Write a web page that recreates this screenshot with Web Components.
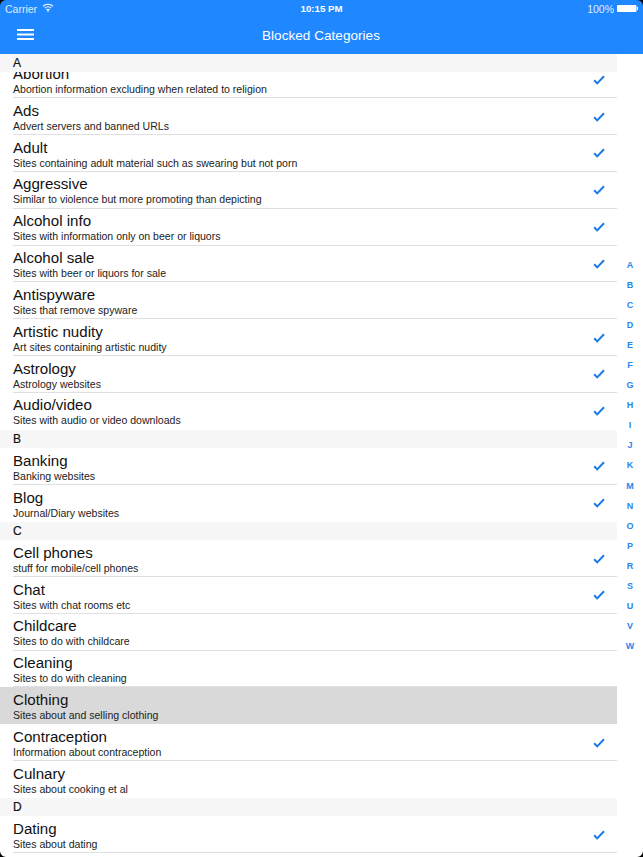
<!DOCTYPE html>
<html><head><meta charset="utf-8"><style>
html,body{margin:0;padding:0;background:#fff}
body{width:643px;height:857px;overflow:hidden;font-family:"Liberation Sans",Arial,sans-serif}
</style></head><body>
<app-screen></app-screen>
<template id="data">A|Abortion;Abortion information excluding when related to religion;1|Ads;Advert servers and banned URLs;1|Adult;Sites containing adult material such as swearing but not porn;1|Aggressive;Similar to violence but more promoting than depicting;1|Alcohol info;Sites with information only on beer or liquors;1|Alcohol sale;Sites with beer or liquors for sale;1|Antispyware;Sites that remove spyware;0|Artistic nudity;Art sites containing artistic nudity;1|Astrology;Astrology websites;1|Audio/video;Sites with audio or video downloads;1
B|Banking;Banking websites;1|Blog;Journal/Diary websites;1
C|Cell phones;stuff for mobile/cell phones;1|Chat;Sites with chat rooms etc;1|Childcare;Sites to do with childcare;0|Cleaning;Sites to do with cleaning;0|Clothing;Sites about and selling clothing;0;s|Contraception;Information about contraception;1|Culnary;Sites about cooking et al;0
D|Dating;Sites about dating;1</template>
<script>
const def=(n,css,html,init)=>customElements.define(n,class extends HTMLElement{connectedCallback(){if(this.shadowRoot)return;const r=this.attachShadow({mode:'open'});r.innerHTML='<style>'+css+'</style>'+html;init&&init(this,r)}});
def('status-bar',`:host{display:flex;align-items:center;height:17px;padding:0 5px 0 5px;color:#fff;font-size:10.5px;position:relative}
.c{position:absolute;left:0;right:0;text-align:center;font-weight:700;font-size:9.7px}.s{flex:1}
svg{display:block}`,
`<span style="opacity:.85">Carrier</span><svg width="12" height="9" viewBox="0 0 13 10" style="margin-left:5px;margin-top:-2px"><path d="M1 3.6a8 8 0 0 1 11 0M3 5.8a5.2 5.2 0 0 1 7 0M4.9 7.8a2.4 2.4 0 0 1 3.2 0" fill="none" stroke="#fff" stroke-width="1.2"/><circle cx="6.5" cy="9" r=".9" fill="#fff"/></svg><span class="s"></span><span class="c">10:15 PM</span><span style="opacity:.85;margin-right:3px">100%</span><svg width="21" height="7" viewBox="0 0 21 7"><rect width="19.5" height="7" rx="1" fill="#fff"/><rect x="20" y="2" width="1" height="3" fill="#fff"/></svg>`);
def('nav-bar',`:host{display:block;height:53.6px;background:#1f87ff;color:#fff;box-sizing:border-box}
.b{display:flex;align-items:center;height:36.6px;position:relative}
.t{flex:1;text-align:center;font-size:13.5px;letter-spacing:.05px;padding-right:1px}
svg{position:absolute;left:17px;top:12px}`,
`<slot name="status"></slot><div class="b"><svg width="17" height="11" viewBox="0 0 17 11"><path d="M0 1h17M0 5.5h17M0 10h17" stroke="#fff" stroke-width="2"/></svg><div class="t"><slot></slot></div></div>`);
def('section-head',`:host{display:block;height:18.42px;background:#f7f7f7;color:#111;font-size:12px;line-height:18px;padding-left:13px;position:relative;z-index:2;-webkit-text-stroke:.2px #111}`,`<slot></slot>`);
def('cat-row',`:host{display:block;height:36.84px;position:relative;box-sizing:border-box;padding-left:13px;color:#111}
:host([selected]){background:#d9d9d9}
.t{font-size:15.1px;line-height:19px;padding-top:2.6px}
.d{font-size:10.55px;line-height:12px;color:#222}
.sep{position:absolute;left:13px;right:0;bottom:0;height:1px;background:#e0e0e0}
:host([selected]) .sep,:host([last]) .sep{display:none}
svg{position:absolute;right:12px;top:13.4px;display:none}
:host([checked]) svg{display:block}`,
`<div class="t"><slot name="t"></slot></div><div class="d"><slot name="d"></slot></div><div class="sep"></div><svg width="12" height="10" viewBox="0 0 12 10"><path d="M1.2 5.2L4.2 8.4L11 1.2" fill="none" stroke="#1a7ae8" stroke-width="2"/></svg>`);
def('index-bar',`:host{position:absolute;right:0;top:255px;width:26px;display:flex;flex-direction:column;align-items:center;color:#2b84ea;font-size:9px;font-weight:700}
span{height:20.05px;line-height:20px}`,'',(h,r)=>{'ABCDEFGHIJKMNOPRSUVW'.split('').forEach(c=>{const s=document.createElement('span');s.textContent=c;r.appendChild(s)})});
def('cat-list',`:host{display:block;width:617px;position:relative;flex:1;overflow:hidden}`,`<slot></slot>`);
def('screen-corners',`:host{position:absolute;inset:0;pointer-events:none}
svg{position:absolute}`,
`<svg width="6" height="6" style="left:0;top:0"><path d="M0 0h6a6 6 0 0 0-6 6z"/></svg><svg width="6" height="6" style="right:0;top:0"><path d="M6 0H0a6 6 0 0 1 6 6z"/></svg><svg width="6" height="6" style="left:0;bottom:0"><path d="M0 6h6a6 6 0 0 1-6-6z"/></svg><svg width="6" height="6" style="right:0;bottom:0"><path d="M6 6H0a6 6 0 0 0 6-6z"/></svg>`);
def('app-screen',`:host{display:flex;flex-direction:column;width:643px;height:857px;position:relative;overflow:hidden}`,
`<nav-bar><status-bar slot="status"></status-bar>Blocked Categories</nav-bar><cat-list id="l"></cat-list><index-bar></index-bar><screen-corners></screen-corners>`,
(h,r)=>{
 const l=r.getElementById('l');const esc=s=>s.replace(/&/g,'&amp;');
 let first=true;
 document.getElementById('data').content.textContent.trim().split('\n').forEach((sec,si,all)=>{
  const p=sec.split('|');
  const head=document.createElement('section-head');head.textContent=p[0];l.appendChild(head);
  const items=p.slice(1);
  items.forEach((it,i)=>{
   const [t,d,c,s]=it.split(';');
   const e=document.createElement('cat-row');
   if(c==='1')e.setAttribute('checked','');if(s)e.setAttribute('selected','');
   if(i===items.length-1&&si<all.length-1)e.setAttribute('last','');
   e.innerHTML=`<span slot="t">${esc(t)}</span><span slot="d">${esc(d)}</span>`;
   if(first){e.style.marginTop='-10.6px';first=false}
   l.appendChild(e);
  });
 });
});
</script></body></html>
